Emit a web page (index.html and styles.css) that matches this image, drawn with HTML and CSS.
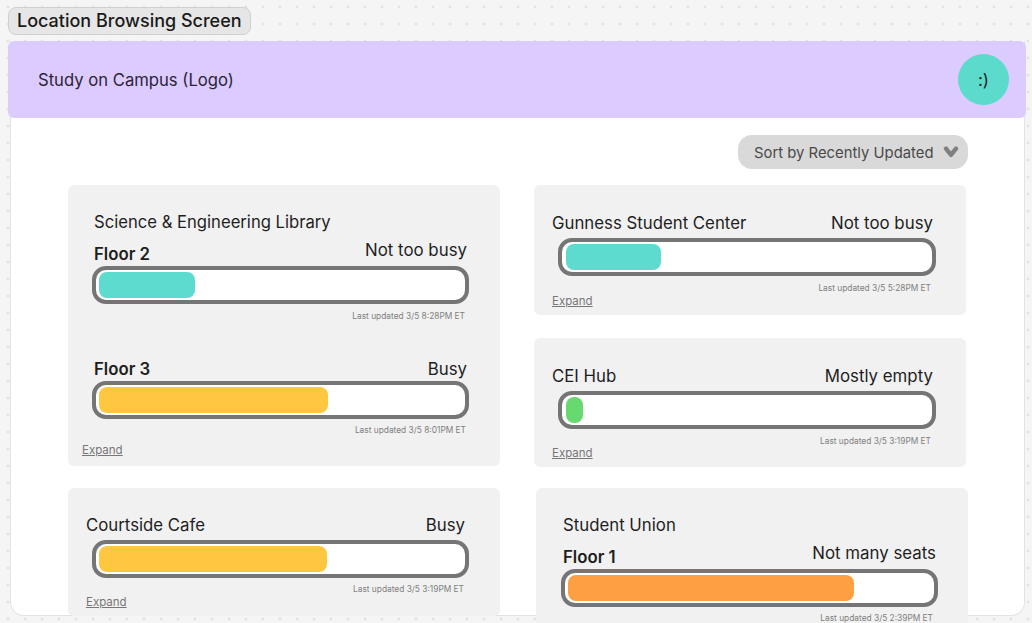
FILE: index.html
```html
<!DOCTYPE html>
<html lang="en">
<head>
<meta charset="utf-8">
<title>Location Browsing Screen</title>
<link rel="stylesheet" href="styles.css">
</head>
<body>
<div class="chip">Location Browsing Screen</div>
<main class="frame">
  <header class="topbar">
    <div class="logo">Study on Campus (Logo)</div>
    <div class="avatar">:)</div>
  </header>
  <div class="sort-row">
    <div class="sort">
      <span class="sort-label">Sort by Recently Updated</span>
      <svg class="chev" width="16" height="12" viewBox="0 0 16 12"><path d="M3 2.6 8 8.8l5-6.2" fill="none" stroke="#808080" stroke-width="4.4" stroke-linejoin="round" stroke-linecap="round"/></svg>
    </div>
  </div>
  <div class="columns">
    <div class="col">
      <section class="card card-library">
        <h2 class="place place-library">Science &amp; Engineering Library</h2>
        <div class="row"><strong class="floor">Floor 2</strong><span class="status status-up">Not too busy</span></div>
        <div class="bar"><div class="fill teal" style="width:96px"></div></div>
        <div class="updated">Last updated 3/5 8:28PM ET</div>
        <div class="row row-floor3"><strong class="floor">Floor 3</strong><span class="status">Busy</span></div>
        <div class="bar"><div class="fill yellow" style="width:229px"></div></div>
        <div class="updated updated-flush">Last updated 3/5 8:01PM ET</div>
        <a class="expand expand-library">Expand</a>
      </section>
      <section class="card card-cafe">
        <div class="row"><span class="place">Courtside Cafe</span><span class="status">Busy</span></div>
        <div class="bar bar-cafe"><div class="fill yellow" style="width:228px"></div></div>
        <div class="updated updated-cafe">Last updated 3/5 3:19PM ET</div>
        <a class="expand">Expand</a>
      </section>
    </div>
    <div class="col">
      <section class="card card-gunness">
        <div class="row"><span class="place">Gunness Student Center</span><span class="status">Not too busy</span></div>
        <div class="bar bar-wide"><div class="fill teal" style="width:95px"></div></div>
        <div class="updated">Last updated 3/5 5:28PM ET</div>
        <a class="expand">Expand</a>
      </section>
      <section class="card card-cei">
        <div class="row"><span class="place">CEI Hub</span><span class="status">Mostly empty</span></div>
        <div class="bar bar-wide"><div class="fill green" style="width:17px"></div></div>
        <div class="updated">Last updated 3/5 3:19PM ET</div>
        <a class="expand expand-cei">Expand</a>
      </section>
      <section class="card card-union">
        <h2 class="place place-union">Student Union</h2>
        <div class="row"><strong class="floor">Floor 1</strong><span class="status status-up">Not many seats</span></div>
        <div class="bar"><div class="fill orange" style="width:286px"></div></div>
        <div class="updated updated-union">Last updated 3/5 2:39PM ET</div>
      </section>
    </div>
  </div>
</main>
</body>
</html>
```
FILE: styles.css
```css
* { box-sizing: border-box; }
html, body { margin: 0; height: 623px; overflow: hidden; }
body {
  padding: 7px 0 0 8px;
  font-family: Inter, "Liberation Sans", sans-serif;
  color: #1e1e1e;
  background-color: #f5f5f5;
  background-image: radial-gradient(circle, #cfcfcf 0.8px, transparent 1.2px);
  background-size: 17px 17px;
  background-position: -0.5px -1.5px;
}
.chip {
  width: 243px;
  height: 28px;
  padding-left: 8px;
  border: 1px solid #cfcfcf;
  border-radius: 8px;
  background: #e6e6e6;
  font-size: 18px;
  font-weight: 500;
  line-height: 26px;
  color: #1a1a1a;
}
.frame {
  width: 1015px;
  height: 575px;
  margin: 6px 0 0 2px;
  border: 1px solid #e3e3e3;
  border-top: 0;
  border-radius: 0 0 14px 14px;
  background: #fff;
}
.topbar {
  display: flex;
  align-items: center;
  justify-content: space-between;
  width: 1018px;
  height: 77px;
  margin-left: -3px;
  padding: 0 17px 0 30px;
  border-radius: 6px;
  background: #dccbff;
}
.logo { font-size: 16.65px; color: #2c2438; }
.avatar {
  display: flex;
  align-items: center;
  justify-content: center;
  width: 51px;
  height: 51px;
  border-radius: 50%;
  background: #5cdbcd;
  font-size: 17px;
  color: #1e1e1e;
}
.sort-row { display: flex; justify-content: flex-end; margin: 17px 56px 16px 0; }
.sort {
  display: flex;
  align-items: center;
  gap: 9px;
  width: 230px;
  height: 34px;
  padding-left: 16px;
  border-radius: 14px;
  background: #d9d9d9;
  font-size: 14.85px;
  color: #4a4a4a;
}
.sort-label { padding-top: 1px; }
.columns {
  display: grid;
  grid-template-columns: 432px 432px;
  column-gap: 34px;
  margin-left: 57px;
}
.col { display: flex; flex-direction: column; align-items: flex-start; }
.card {
  flex: none;
  width: 432px;
  border-radius: 6px;
  background: #f1f1f1;
}
.card-library { height: 281px; padding: 26px 33px 0 26px; margin-bottom: 22px; }
.card-cafe { height: 128px; padding: 26px 35px 0 18px; }
.card-gunness { height: 130px; padding: 27px 33px 0 18px; margin-bottom: 23px; }
.card-cei { height: 129px; padding: 27px 33px 0 18px; margin-bottom: 21px; }
.card-union { height: 150px; padding: 26px 32px 0 27px; margin-left: 2px; }
.place { margin: 0; font-size: 16.8px; font-weight: 400; line-height: 20px; color: #1e1e1e; }
.place-library { padding-top: 1px; margin-bottom: 11px; font-size: 16.65px; }
.place-union { padding-top: 1px; margin-bottom: 11px; }
.row { display: flex; justify-content: space-between; align-items: center; height: 21px; margin-bottom: -1px; padding-top: 1px; }
.row-floor3 { margin-top: 36px; }
.floor { font-size: 16.8px; font-weight: 600; line-height: 20px; }
.status { font-size: 16.85px; line-height: 20px; }
.status-up { position: relative; top: -4px; }
.bar {
  width: 377px;
  height: 38px;
  margin: 3px 0 0 -2px;
  padding: 2px 3px;
  border: 4px solid #757575;
  border-radius: 14px;
  background: #fff;
}
.bar-wide { margin: 6px 0 0 6px; width: 378px; padding-left: 4px; }
.bar-cafe { margin: 6px 0 0 6px; }
.fill { height: 26px; border-radius: 8px; }
.teal { background: #5cdbce; }
.yellow { background: #ffc740; }
.orange { background: #ff9f43; }
.green { background: #67d96f; }
.updated {
  margin: 7px 2px 0 0;
  font-size: 8.35px;
  line-height: 11px;
  color: #808080;
  text-align: right;
}
.updated-flush { margin-top: 6px; margin-right: 1px; }
.updated-cafe { margin-top: 6px; margin-right: 1px; }
.updated-union { margin-top: 6px; margin-right: 3px; }
.expand {
  display: block;
  width: fit-content;
  margin-top: 0;
  font-size: 11.5px;
  line-height: 14px;
  color: #777;
  text-decoration: underline;
}
.expand-cei { margin-top: -1px; }
.expand-library { margin: 7px 0 0 -12px; }
```
